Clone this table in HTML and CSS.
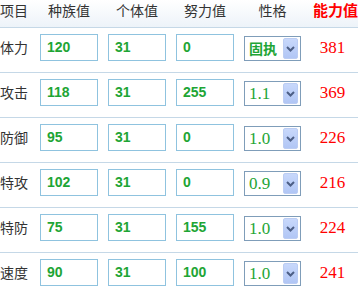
FILE: index.html
```
<!DOCTYPE html>
<html lang="zh">
<head>
<meta charset="utf-8">
<link rel="stylesheet" href="styles.css">
</head>
<body>
<div class="stats">
  <div class="row head">
    <div class="label">项目</div>
    <div class="hcell">种族值</div>
    <div class="hcell">个体值</div>
    <div class="hcell">努力值</div>
    <div class="hcell">性格</div>
    <div class="hcell total-h">能力值</div>
  </div>
  <div class="row">
    <div class="label">体力</div>
    <div class="box">120</div><div class="box">31</div><div class="box">0</div>
    <div class="select"><span class="val bold">固执</span><span class="btn"><svg width="9" height="6" viewBox="0 0 9 6"><path d="M1 1 L4.5 4.5 L8 1" fill="none" stroke="#4d5f86" stroke-width="2"/></svg></span></div>
    <div class="total">381</div>
  </div>
  <div class="row">
    <div class="label">攻击</div>
    <div class="box">118</div><div class="box">31</div><div class="box">255</div>
    <div class="select"><span class="val">1.1</span><span class="btn"><svg width="9" height="6" viewBox="0 0 9 6"><path d="M1 1 L4.5 4.5 L8 1" fill="none" stroke="#4d5f86" stroke-width="2"/></svg></span></div>
    <div class="total">369</div>
  </div>
  <div class="row">
    <div class="label">防御</div>
    <div class="box">95</div><div class="box">31</div><div class="box">0</div>
    <div class="select"><span class="val">1.0</span><span class="btn"><svg width="9" height="6" viewBox="0 0 9 6"><path d="M1 1 L4.5 4.5 L8 1" fill="none" stroke="#4d5f86" stroke-width="2"/></svg></span></div>
    <div class="total">226</div>
  </div>
  <div class="row">
    <div class="label">特攻</div>
    <div class="box">102</div><div class="box">31</div><div class="box">0</div>
    <div class="select"><span class="val">0.9</span><span class="btn"><svg width="9" height="6" viewBox="0 0 9 6"><path d="M1 1 L4.5 4.5 L8 1" fill="none" stroke="#4d5f86" stroke-width="2"/></svg></span></div>
    <div class="total">216</div>
  </div>
  <div class="row">
    <div class="label">特防</div>
    <div class="box">75</div><div class="box">31</div><div class="box">155</div>
    <div class="select"><span class="val">1.0</span><span class="btn"><svg width="9" height="6" viewBox="0 0 9 6"><path d="M1 1 L4.5 4.5 L8 1" fill="none" stroke="#4d5f86" stroke-width="2"/></svg></span></div>
    <div class="total">224</div>
  </div>
  <div class="row">
    <div class="label">速度</div>
    <div class="box">90</div><div class="box">31</div><div class="box">100</div>
    <div class="select"><span class="val">1.0</span><span class="btn"><svg width="9" height="6" viewBox="0 0 9 6"><path d="M1 1 L4.5 4.5 L8 1" fill="none" stroke="#4d5f86" stroke-width="2"/></svg></span></div>
    <div class="total">241</div>
  </div>
</div>
</body>
</html>
```
FILE: styles.css
```
html, body {
  margin: 0;
  padding: 0;
  background: #ffffff;
}
body {
  width: 358px;
  height: 288px;
  overflow: hidden;
  font-family: "Noto Sans CJK SC", "DejaVu Sans", sans-serif;
  color: #333333;
}
.stats {
  display: flex;
  flex-direction: column;
}
.row {
  display: grid;
  grid-template-columns: 40px 68px 68px 68px 57px 57px;
  height: 44px;
  border-bottom: 1px solid #c5d8e7;
  align-items: start;
}
.head {
  height: 27px;
  background: linear-gradient(#ffffff, #edf3f9);
}
.label {
  margin-top: 6px;
  font-size: 14px;
  line-height: 27px;
  color: #333333;
  white-space: nowrap;
}
.head .label,
.head .hcell {
  margin-top: 0;
  line-height: 20px;
  font-size: 14px;
  white-space: nowrap;
  color: #333333;
}
.head .hcell {
  width: 58px;
  text-align: center;
}
.head .hcell:nth-child(5) { width: 57px; }
.head .total-h {
  width: 57px;
  color: #ff0000;
  font-weight: bold;
  font-size: 15px;
  text-align: right;
}
.box {
  box-sizing: border-box;
  width: 58px;
  height: 27px;
  margin-top: 6px;
  border: 1px solid #8fc3df;
  padding-left: 6px;
  font-family: "Liberation Sans", "DejaVu Sans", sans-serif;
  font-weight: bold;
  font-size: 14px;
  line-height: 25px;
  color: #1ea535;
}
.select {
  box-sizing: border-box;
  width: 57px;
  height: 25px;
  margin-top: 8px;
  border: 1px solid #7f9db9;
  display: flex;
  align-items: center;
  justify-content: space-between;
  padding: 1px 2px 1px 4px;
}
.val {
  font-family: "Liberation Serif", serif;
  font-size: 17px;
  color: #1ea535;
  line-height: 21px;
}
.val.bold {
  font-family: "Noto Sans CJK SC", sans-serif;
  font-weight: bold;
  font-size: 14px;
}
.btn {
  width: 15px;
  height: 21px;
  box-sizing: border-box;
  border-radius: 2px;
  background: linear-gradient(#c8d8fb, #b1c6f5);
  border: 1px solid #bccdf3;
  display: flex;
  align-items: center;
  justify-content: center;
}
.total {
  margin-top: 6px;
  font-family: "Liberation Serif", serif;
  font-size: 17px;
  line-height: 27px;
  color: #ff0000;
  text-align: center;
  padding-left: 6px;
}
```
